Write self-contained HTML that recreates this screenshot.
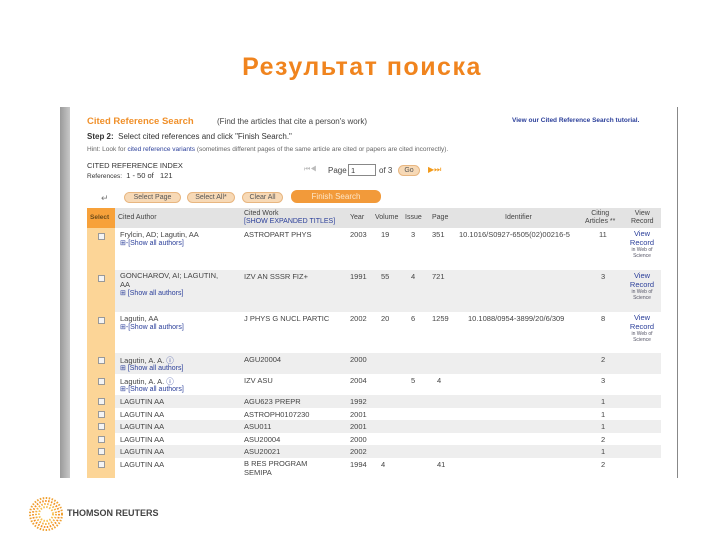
<!DOCTYPE html>
<html><head><meta charset="utf-8"><style>
*{margin:0;padding:0;box-sizing:border-box}
body{width:720px;height:540px;background:#fff;position:relative;overflow:hidden;font-family:"Liberation Sans",Arial,sans-serif;color:#333}
.a{position:absolute;white-space:nowrap}
.t{font-size:8px}
.lk{color:#2b3f9a}
.btn{position:absolute;height:11px;border-radius:6px;background:#f7d9b6;border:1px solid #e8b680;font-size:7px;color:#555;text-align:center;line-height:9px}
.row{position:absolute;left:87px;width:574px}
.sel{position:absolute;left:0;top:0;bottom:0;width:28px;background:#fcd597}
.cb{position:absolute;left:11px;width:7px;height:7px;border:1px solid #999;background:#f4f4f4}
.c{position:absolute;font-size:7.5px;color:#444;white-space:nowrap}
.sa{position:absolute;font-size:7px;color:#2b3f9a;white-space:nowrap}
.vr{position:absolute;left:538px;width:34px;text-align:center;color:#2b3f9a;font-size:7.5px;line-height:8.5px}
.vr small{font-size:5px;display:block;line-height:6px;color:#556}
</style></head><body>
<div class="a" style="left:0;width:724px;top:53px;text-align:center;font-size:25px;font-weight:bold;color:#f0841e;letter-spacing:1.5px">Результат поиска</div>
<div class="a" style="left:60px;top:107px;width:10px;height:371px;background:linear-gradient(90deg,#9a9a9a,#c8c8c8)"></div>
<div class="a" style="left:677px;top:107px;width:1px;height:371px;background:#888"></div>

<div class="a" style="left:87px;top:116px;font-size:9.5px;font-weight:bold;color:#f0902a">Cited Reference Search</div>
<div class="a t" style="left:217px;top:117px;color:#444">(Find the articles that cite a person's work)</div>
<div class="a" style="left:512px;top:117px;font-size:6.5px;font-weight:bold;color:#2b3f9a">View our Cited Reference Search tutorial.</div>
<div class="a t" style="left:87px;top:132px;color:#333"><b>Step 2:</b>&nbsp; Select cited references and click "Finish Search."</div>
<div class="a" style="left:87px;top:146px;font-size:6.5px;color:#666">Hint: Look for <span class="lk">cited reference variants</span> (sometimes different pages of the same article are cited or papers are cited incorrectly).</div>
<div class="a" style="left:87px;top:161px;font-size:7.5px;color:#333">CITED REFERENCE INDEX</div>
<div class="a" style="left:87px;top:171px;font-size:7.5px;color:#333"><span style="font-size:6.5px">References:</span>&nbsp; 1 - 50 of&nbsp;&nbsp; 121</div>
<div class="a" style="left:304px;top:166px;font-size:7px;color:#bbb">⏮◀</div>
<div class="a t" style="left:328px;top:166px;color:#444">Page</div>
<div class="a" style="left:348px;top:164px;width:28px;height:12px;border:1px solid #888;font-size:7.5px;padding-left:2px;line-height:11px">1</div>
<div class="a t" style="left:379px;top:166px;color:#444">of 3</div>
<div class="btn" style="left:398px;top:165px;width:22px">Go</div>
<div class="a" style="left:428px;top:165px;font-size:8px;color:#f29a1a">▶⏭</div>

<div class="a" style="left:101px;top:193px;font-size:9px;color:#777">↵</div>
<div class="btn" style="left:124px;top:192px;width:57px">Select Page</div>
<div class="btn" style="left:187px;top:192px;width:48px">Select All*</div>
<div class="btn" style="left:242px;top:192px;width:41px">Clear All</div>
<div class="btn" style="left:291px;top:190px;width:90px;height:13px;background:#f29a3a;border-color:#f29a3a;color:#fde6c8;font-size:8px;line-height:12px">Finish Search</div>

<div class="row" style="top:208px;height:20px;background:#e3e3e3">
<div class="sel" style="background:#f7a13a"></div>
<div class="c" style="left:3px;top:6px;font-size:6.5px;font-weight:bold;color:#6a4a1a">Select</div>
<div class="c" style="left:31px;top:6px;font-size:7px">Cited Author</div>
<div class="c" style="left:157px;top:2px;font-size:7px;line-height:8px">Cited Work<br><span class="lk">[SHOW EXPANDED TITLES]</span></div>
<div class="c" style="left:263px;top:6px;font-size:7px">Year</div>
<div class="c" style="left:288px;top:6px;font-size:7px">Volume</div>
<div class="c" style="left:318px;top:6px;font-size:7px">Issue</div>
<div class="c" style="left:345px;top:6px;font-size:7px">Page</div>
<div class="c" style="left:418px;top:6px;font-size:7px">Identifier</div>
<div class="c" style="left:498px;top:2px;font-size:7px;line-height:8px;text-align:center">Citing<br>Articles **</div>
<div class="c" style="left:544px;top:2px;font-size:7px;line-height:8px;text-align:center">View<br>Record</div>
</div>

<div class="row" style="top:228px;height:42px;background:#fff"><div class="sel"></div><div class="cb" style="top:5px"></div>
<div class="c" style="left:33px;top:2px">Frylcin, AD; Lagutin, AA</div><div class="sa" style="left:33px;top:11px">⊞-[Show all authors]</div>
<div class="c" style="left:157px;top:2px">ASTROPART PHYS</div><div class="c" style="left:263px;top:2px">2003</div><div class="c" style="left:294px;top:2px">19</div><div class="c" style="left:324px;top:2px">3</div><div class="c" style="left:345px;top:2px">351</div><div class="c" style="left:372px;top:2px">10.1016/S0927-6505(02)00216-5</div><div class="c" style="left:512px;top:2px">11</div>
<div class="vr" style="top:2px">View<br>Record<small>in Web of<br>Science</small></div></div>

<div class="row" style="top:270px;height:42px;background:#eeeeee"><div class="sel"></div><div class="cb" style="top:5px"></div>
<div class="c" style="left:33px;top:2px;line-height:8.5px">GONCHAROV, AI; LAGUTIN,<br>AA</div><div class="sa" style="left:33px;top:19px">⊞ [Show all authors]</div>
<div class="c" style="left:157px;top:2px">IZV AN SSSR FIZ+</div><div class="c" style="left:263px;top:2px">1991</div><div class="c" style="left:294px;top:2px">55</div><div class="c" style="left:324px;top:2px">4</div><div class="c" style="left:345px;top:2px">721</div><div class="c" style="left:514px;top:2px">3</div>
<div class="vr" style="top:2px">View<br>Record<small>in Web of<br>Science</small></div></div>

<div class="row" style="top:312px;height:41px;background:#fff"><div class="sel"></div><div class="cb" style="top:5px"></div>
<div class="c" style="left:33px;top:2px">Lagutin, AA</div><div class="sa" style="left:33px;top:11px">⊞-[Show all authors]</div>
<div class="c" style="left:157px;top:2px">J PHYS G NUCL PARTIC</div><div class="c" style="left:263px;top:2px">2002</div><div class="c" style="left:294px;top:2px">20</div><div class="c" style="left:324px;top:2px">6</div><div class="c" style="left:345px;top:2px">1259</div><div class="c" style="left:381px;top:2px">10.1088/0954-3899/20/6/309</div><div class="c" style="left:514px;top:2px">8</div>
<div class="vr" style="top:2px">View<br>Record<small>in Web of<br>Science</small></div></div>

<div class="row" style="top:353px;height:21px;background:#eeeeee"><div class="sel"></div><div class="cb" style="top:4px"></div>
<div class="c" style="left:33px;top:2px">Lagutin, A. A. <span class="lk">ⓘ</span></div><div class="sa" style="left:33px;top:11px">⊞ [Show all authors]</div>
<div class="c" style="left:157px;top:2px">AGU20004</div><div class="c" style="left:263px;top:2px">2000</div><div class="c" style="left:514px;top:2px">2</div></div>

<div class="row" style="top:374px;height:21px;background:#fff"><div class="sel"></div><div class="cb" style="top:4px"></div>
<div class="c" style="left:33px;top:2px">Lagutin, A. A. <span class="lk">ⓘ</span></div><div class="sa" style="left:33px;top:11px">⊞-[Show all authors]</div>
<div class="c" style="left:157px;top:2px">IZV ASU</div><div class="c" style="left:263px;top:2px">2004</div><div class="c" style="left:324px;top:2px">5</div><div class="c" style="left:350px;top:2px">4</div><div class="c" style="left:514px;top:2px">3</div></div>

<div class="row" style="top:395px;height:13px;background:#eeeeee"><div class="sel"></div><div class="cb" style="top:3px"></div><div class="c" style="left:33px;top:2px">LAGUTIN AA</div><div class="c" style="left:157px;top:2px">AGU623 PREPR</div><div class="c" style="left:263px;top:2px">1992</div><div class="c" style="left:514px;top:2px">1</div></div>
<div class="row" style="top:408px;height:12px;background:#fff"><div class="sel"></div><div class="cb" style="top:3px"></div><div class="c" style="left:33px;top:2px">LAGUTIN AA</div><div class="c" style="left:157px;top:2px">ASTROPH0107230</div><div class="c" style="left:263px;top:2px">2001</div><div class="c" style="left:514px;top:2px">1</div></div>
<div class="row" style="top:420px;height:13px;background:#eeeeee"><div class="sel"></div><div class="cb" style="top:3px"></div><div class="c" style="left:33px;top:2px">LAGUTIN AA</div><div class="c" style="left:157px;top:2px">ASU011</div><div class="c" style="left:263px;top:2px">2001</div><div class="c" style="left:514px;top:2px">1</div></div>
<div class="row" style="top:433px;height:12px;background:#fff"><div class="sel"></div><div class="cb" style="top:3px"></div><div class="c" style="left:33px;top:2px">LAGUTIN AA</div><div class="c" style="left:157px;top:2px">ASU20004</div><div class="c" style="left:263px;top:2px">2000</div><div class="c" style="left:514px;top:2px">2</div></div>
<div class="row" style="top:445px;height:13px;background:#eeeeee"><div class="sel"></div><div class="cb" style="top:3px"></div><div class="c" style="left:33px;top:2px">LAGUTIN AA</div><div class="c" style="left:157px;top:2px">ASU20021</div><div class="c" style="left:263px;top:2px">2002</div><div class="c" style="left:514px;top:2px">1</div></div>
<div class="row" style="top:458px;height:20px;background:#fff"><div class="sel"></div><div class="cb" style="top:3px"></div><div class="c" style="left:33px;top:2px">LAGUTIN AA</div><div class="c" style="left:157px;top:2px;line-height:8.5px">B RES PROGRAM<br>SEMIPA</div><div class="c" style="left:263px;top:2px">1994</div><div class="c" style="left:294px;top:2px">4</div><div class="c" style="left:350px;top:2px">41</div><div class="c" style="left:514px;top:2px">2</div></div>

<svg class="a" style="left:28px;top:496px" width="36" height="36" viewBox="0 0 36 36">
<g stroke="#f0a030" stroke-width="2" stroke-dasharray="1.5 1.5" fill="none">
<circle cx="18" cy="18" r="16"/><circle cx="18" cy="18" r="13" stroke="#f29022"/><circle cx="18" cy="18" r="10" stroke="#f5b040"/><circle cx="18" cy="18" r="7" stroke="#f7c050"/>
</g></svg>
<div class="a" style="left:67px;top:508px;font-size:9px;font-weight:bold;color:#444">THOMSON REUTERS</div>
</body></html>
